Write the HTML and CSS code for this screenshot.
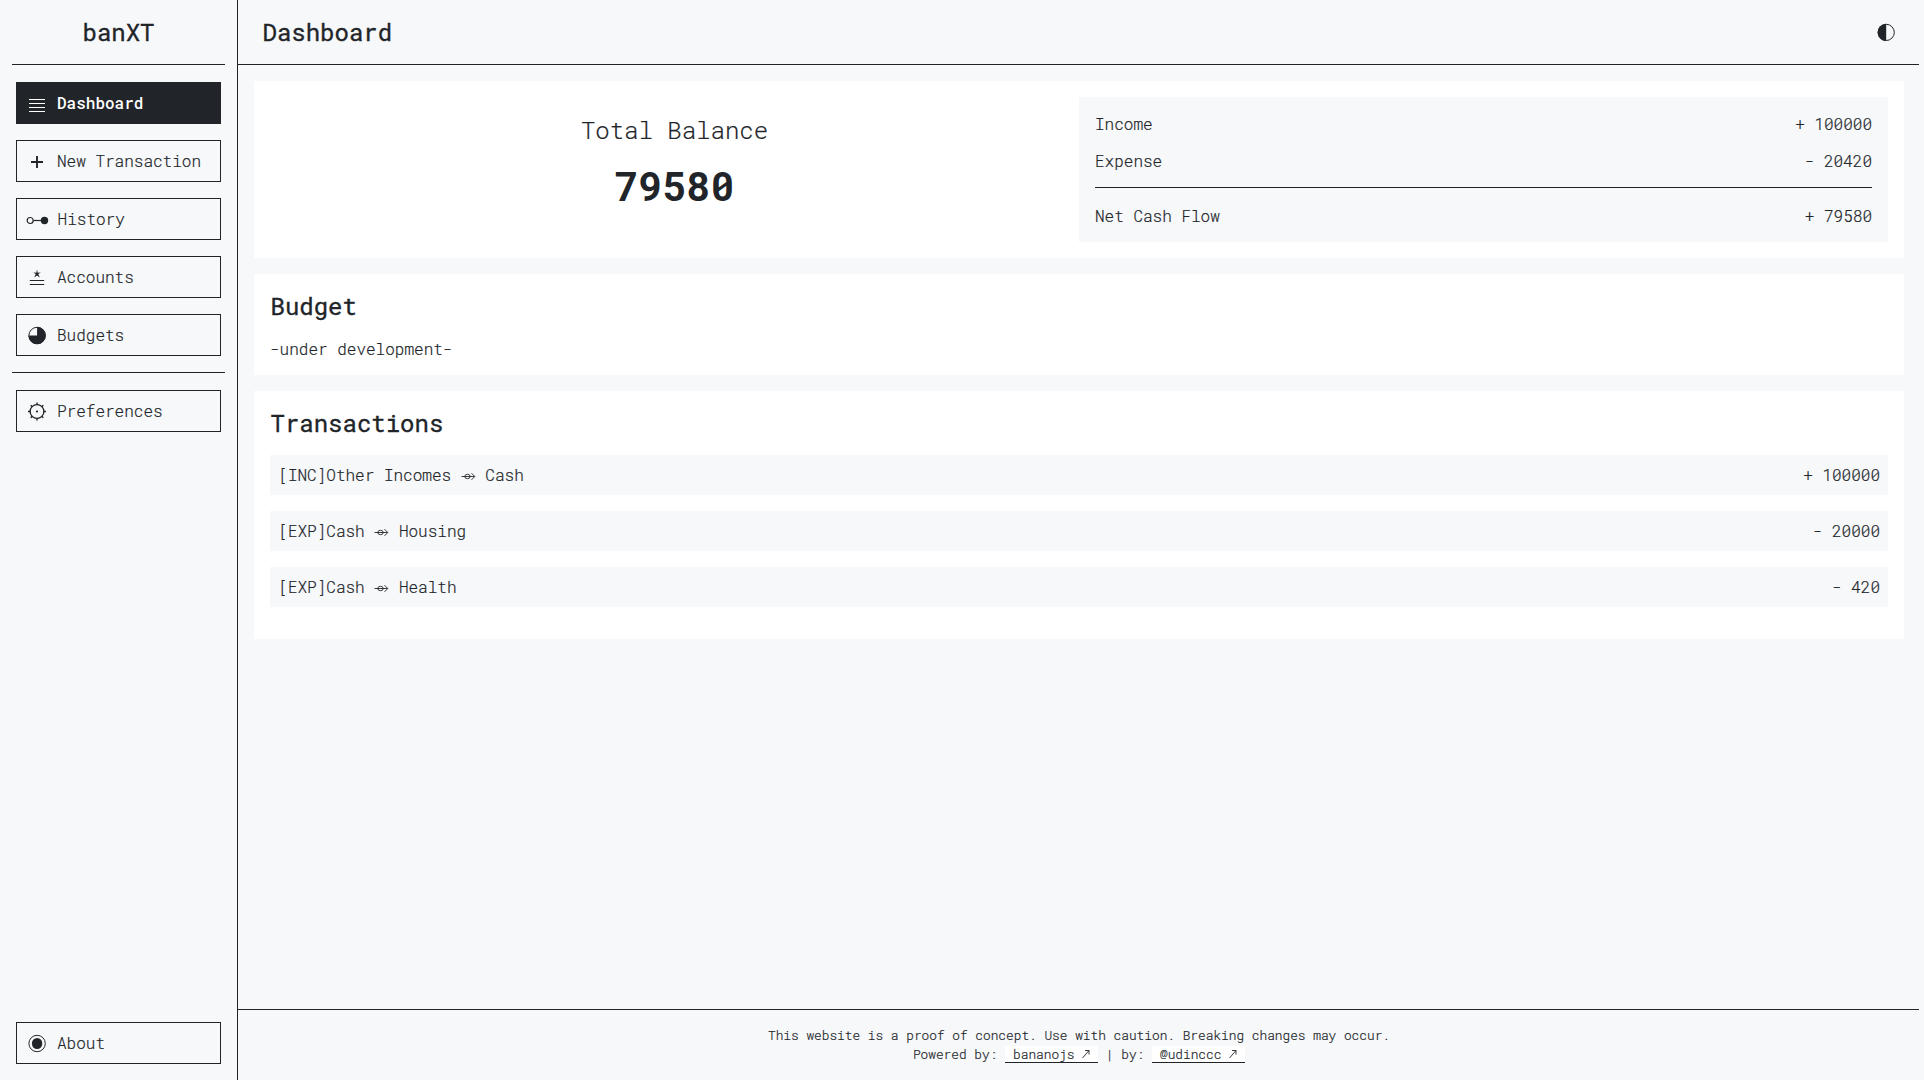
FILE: index.html
```html
<!DOCTYPE html>
<html lang="en">
<head>
<meta charset="utf-8">
<title>banXT</title>
<link rel="stylesheet" href="styles.css">
</head>
<body>
<div class="app">
  <aside class="sidebar">
    <div class="brand">banXT</div>
    <hr class="rule">
    <nav class="nav">
      <a class="nav-item active"><svg class="icon" viewBox="0 0 22 22"><path d="M3 7.5h16M3 11.5h16M3 15.5h16M3 19.5h16" stroke-width="1"/></svg>Dashboard</a>
      <a class="nav-item"><svg class="icon" viewBox="0 0 22 22"><path d="M5 12h12M11 6v12" stroke-width="1.900"/></svg>New Transaction</a>
      <a class="nav-item wide"><svg class="icon" viewBox="0 0 22 22"><circle cx="4.2" cy="12.5" r="3"/><path d="M7.5 12.5h8"/><circle class="fill" stroke="none" cx="18.5" cy="12.5" r="3.7"/></svg>History</a>
      <a class="nav-item"><svg class="icon" viewBox="0 0 22 22"><path class="fill" stroke="none" d="M11 3.600l.7 3.100 3.200-.100-2.600 1.500 1.500 3.400L11 9.400l-2.800 2.100 1.500-3.400-2.600-1.500 3.200 .100z"/><path d="M3.800 14.500h14.400M3.800 18.500h14.400" stroke-width="1"/></svg>Accounts</a>
      <a class="nav-item"><svg class="icon" viewBox="0 0 22 22"><circle cx="11.100" cy="11.500" r="8.200" stroke-width="1"/><path class="fill" stroke="none" d="M11.100 11.500V2.800A8.700 8.700 0 1 1 2.400 11.500z"/></svg>Budgets</a>
    </nav>
    <hr class="rule">
    <nav class="nav">
      <a class="nav-item"><svg class="icon" viewBox="0 0 22 22"><circle cx="11" cy="11.500" r="6.900" stroke-width="1.300"/><circle class="fill" stroke="none" cx="11" cy="11.500" r="1.100"/><path d="M11 2.500v2.500M11 18v2.500M2 11.500h2.500M17.500 11.500H20M4.700 5.200l1.800 1.800M15.500 16l1.800 1.800M17.300 5.200l-1.800 1.800M4.700 17.800l1.800-1.800" stroke-width="1.400"/></svg>Preferences</a>
    </nav>
    <nav class="nav nav-bottom">
      <a class="nav-item"><svg class="icon" viewBox="0 0 22 22"><circle cx="11.100" cy="11.500" r="8.200" stroke-width="1"/><ellipse class="fill" stroke="none" cx="11.100" cy="11.500" rx="5.200" ry="5.600"/></svg>About</a>
    </nav>
  </aside>
  <div class="main">
    <header class="topbar">
      <h1>Dashboard</h1>
      <svg class="theme" viewBox="0 0 18 18"><circle cx="9.200" cy="9.400" r="8.100" stroke-width="1"/><path class="fill" stroke="none" d="M9.200 .800a8.600 8.600 0 0 0 0 17.200z"/></svg>
    </header>
    <main class="content">
      <section class="card overview">
        <div class="balance">
          <div class="balance-label">Total Balance</div>
          <div class="balance-value">79580</div>
        </div>
        <div class="flow">
          <div class="line"><span>Income</span><span>+ 100000</span></div>
          <div class="line"><span>Expense</span><span>- 20420</span></div>
          <hr class="flow-rule">
          <div class="line"><span>Net Cash Flow</span><span>+ 79580</span></div>
        </div>
      </section>
      <section class="card budget">
        <h2>Budget</h2>
        <p>-under development-</p>
      </section>
      <section class="card transactions">
        <h2>Transactions</h2>
        <div class="row"><span>[INC]Other Incomes <svg class="arrow" viewBox="0 0 15 9"><path d="M.500 4.500h13M10.500 1.200l3.300 3.300-3.300 3.300"/><ellipse cx="6.500" cy="4.500" rx="2.700" ry="2.200"/></svg> Cash</span><span>+ 100000</span></div>
        <div class="row"><span>[EXP]Cash <svg class="arrow" viewBox="0 0 15 9"><path d="M.500 4.500h13M10.500 1.200l3.300 3.300-3.300 3.300"/><ellipse cx="6.500" cy="4.500" rx="2.700" ry="2.200"/></svg> Housing</span><span>- 20000</span></div>
        <div class="row"><span>[EXP]Cash <svg class="arrow" viewBox="0 0 15 9"><path d="M.500 4.500h13M10.500 1.200l3.300 3.300-3.300 3.300"/><ellipse cx="6.500" cy="4.500" rx="2.700" ry="2.200"/></svg> Health</span><span>- 420</span></div>
      </section>
    </main>
    <footer class="footer">
      <div>This website is a proof of concept. Use with caution. Breaking changes may occur.</div>
      <div>Powered by: <a class="link">bananojs <svg class="ext" viewBox="0 0 8 10"><path d="M.500 9L7 1.500M3 1.500h4v4"/></svg></a> | by: <a class="link">@udinccc <svg class="ext" viewBox="0 0 8 10"><path d="M.500 9L7 1.500M3 1.500h4v4"/></svg></a></div>
    </footer>
  </div>
</div>
</body>
</html>
```
FILE: styles.css
```css
* { box-sizing: border-box; }
body {
  margin: 0;
  background: #f7f8fa;
  color: #212529;
  font: 300 16px/24px "Roboto Mono", "Liberation Mono", monospace;
  -webkit-text-stroke: 0.2px;
}
svg { fill: none; stroke: currentColor; stroke-width: 1.2; }
.fill { fill: currentColor; }
.app { display: flex; height: 1080px; width: 1919px; }
.sidebar {
  width: 238px;
  border-right: 1px solid #212529;
  display: flex;
  flex-direction: column;
}
.brand {
  height: 64px;
  display: flex;
  align-items: center;
  justify-content: center;
  font-size: 24px;
  font-weight: 400;
  -webkit-text-stroke: 0.35px;
}
.rule { width: 213px; height: 1px; margin: 0 12px; border: 0; background: #212529; flex: none; }
.nav { display: flex; flex-direction: column; gap: 16px; padding: 17px 16px 16px; }
.nav-bottom { margin-top: auto; }
.nav-item {
  height: 42px;
  width: 205px;
  border: 1px solid #212529;
  display: flex;
  align-items: center;
  gap: 9px;
  padding-left: 9px;
}
.wide { gap: 9.6px; }
.active { background: #212529; color: #fff; font-weight: 500; -webkit-text-stroke: 0; }
.icon { width: 22px; height: 22px; overflow: visible; flex: none; }
.main { flex: 1; display: flex; flex-direction: column; }
.topbar {
  height: 65px;
  border-bottom: 1px solid #212529;
  display: flex;
  align-items: center;
  justify-content: space-between;
  padding: 0 24px 0 24.5px;
}
h1, h2 { margin: 0; font-size: 24px; line-height: 32px; font-weight: 400; -webkit-text-stroke: 0.35px; }
.theme { width: 18px; height: 18px; overflow: visible; }
.content { flex: 1; padding: 16px 15px 0 16px; display: flex; flex-direction: column; gap: 16px; }
.card { background: #fff; padding: 16px; }
.overview { display: grid; grid-template-columns: 1fr 1fr; height: 177px; }
.balance { text-align: center; padding-top: 15px; }
.balance-label { font-size: 24px; line-height: 36px; }
.balance-value { font-size: 40px; line-height: 60px; font-weight: 700; margin-top: 8px; -webkit-text-stroke: 0; }
.flow { background: #f7f8fa; padding: 15px 16px; height: 145px; }
.line { display: flex; justify-content: space-between; line-height: 24px; }
.line + .line { margin-top: 13px; }
.flow-rule { height: 1px; border: 0; background: #212529; margin: 14px 0 16px; }
.budget { height: 101px; }
.budget h2, .transactions h2 { padding-left: 0.5px; }
.budget p { margin: 15px 0 0; }
.transactions { height: 248px; }
.row {
  height: 40px;
  background: #f7f8fa;
  display: flex;
  justify-content: space-between;
  align-items: center;
  padding: 0 8px 0 8.3px;
  margin-bottom: 16px;
}
.transactions h2 { margin-bottom: 16px; }
.arrow { width: 15px; height: 9px; stroke-width: 0.9; }
.footer {
  height: 71px;
  border-top: 1px solid #212529;
  padding: 16px 0 0 1px;
  text-align: center;
  font-size: 12.8px;
  line-height: 19.2px;
}
.link { background: #fff; border-bottom: 1px solid #212529; padding: 0 8px; }
.ext { width: 8px; height: 10px; stroke-width: 0.9; }
```
